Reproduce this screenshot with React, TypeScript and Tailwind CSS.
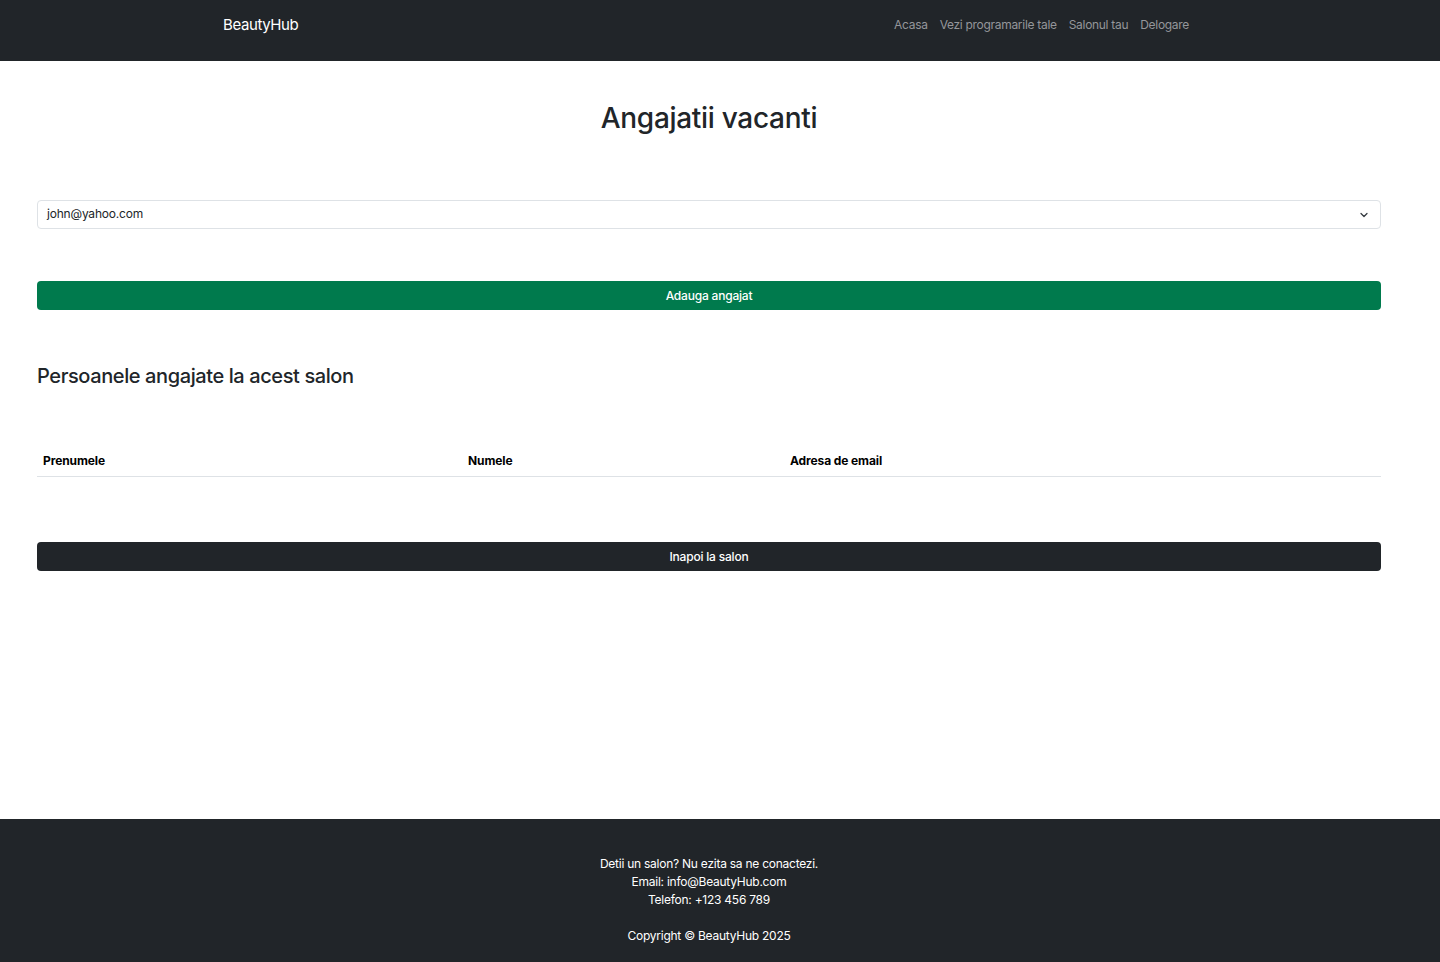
import { ChevronDown } from "lucide-react";

const navLinks = ["Acasa", "Vezi programarile tale", "Salonul tau", "Delogare"];

const Navbar = () => {
    return (
        <nav className="bg-[#212529] h-[61px]">
            <div className="w-[1418px] h-full flex items-start justify-between pl-[223px] pr-[223px] pt-[16px]">
                <a className="text-white text-[15px] leading-[18px] tracking-[-0.4px]">BeautyHub</a>
                <ul className="flex items-center">
                    {navLinks.map((link) => (
                        <li key={link} className="px-[6px] text-[12px] leading-[17px] tracking-[-0.3px] text-[#94969a]">{link}</li>
                    ))}
                </ul>
            </div>
        </nav>
    );
};

const Footer = () => {
    return (
        <footer className="bg-[#212529] h-[143px] mt-auto">
            <div className="w-[1418px] pt-[36px] text-center text-white text-[12px] leading-[18px] tracking-[-0.25px]">
                <p>Detii un salon? Nu ezita sa ne conactezi.</p>
                <p>Email: info@BeautyHub.com</p>
                <p>Telefon: +123 456 789</p>
                <p className="mt-[18px]">Copyright © BeautyHub 2025</p>
            </div>
        </footer>
    );
};

export default function App() {
    return (
        <div className="min-h-[962px] flex flex-col bg-white font-['Inter',sans-serif] text-[#212529]">
            <Navbar />
            <main className="w-[1418px] px-[37px]">
                <h1 className="text-center text-[28px] leading-[34px] font-medium tracking-[-0.3px] mt-[40px]">Angajatii vacanti</h1>

                <div className="mt-[65px] relative h-[29px] border border-[#dee2e6] rounded-[4px] flex items-center pl-[9px] text-[12px] tracking-[-0.2px]">
                    <span className="-mt-[2px]">john@yahoo.com</span>
                    <ChevronDown className="absolute right-[10px] top-[8px] w-[12px] h-[12px] text-[#343a40]" strokeWidth={2.5} />
                </div>

                <button className="mt-[52px] w-full h-[29px] rounded-[4px] bg-[#007a4d] text-white text-[12px] font-medium tracking-[-0.2px]">
                    Adauga angajat
                </button>

                <h3 className="mt-[54px] text-[20px] leading-[24px] font-medium tracking-[-0.4px]">Persoanele angajate la acest salon</h3>

                <div className="mt-[56px] grid grid-cols-[425px_322px_1fr] border-b border-[#dee2e6] text-[12px] leading-[18px] font-bold text-black tracking-[-0.1px]">
                    <div className="px-[6px] pt-[8px] pb-[6px]">Prenumele</div>
                    <div className="px-[6px] pt-[8px] pb-[6px]">Numele</div>
                    <div className="px-[6px] pt-[8px] pb-[6px]">Adresa de email</div>
                </div>

                <button className="mt-[65px] w-full h-[29px] rounded-[4px] bg-[#212529] text-white text-[12px] font-medium tracking-[-0.2px]">
                    Inapoi la salon
                </button>
            </main>
            <Footer />
        </div>
    );
}
